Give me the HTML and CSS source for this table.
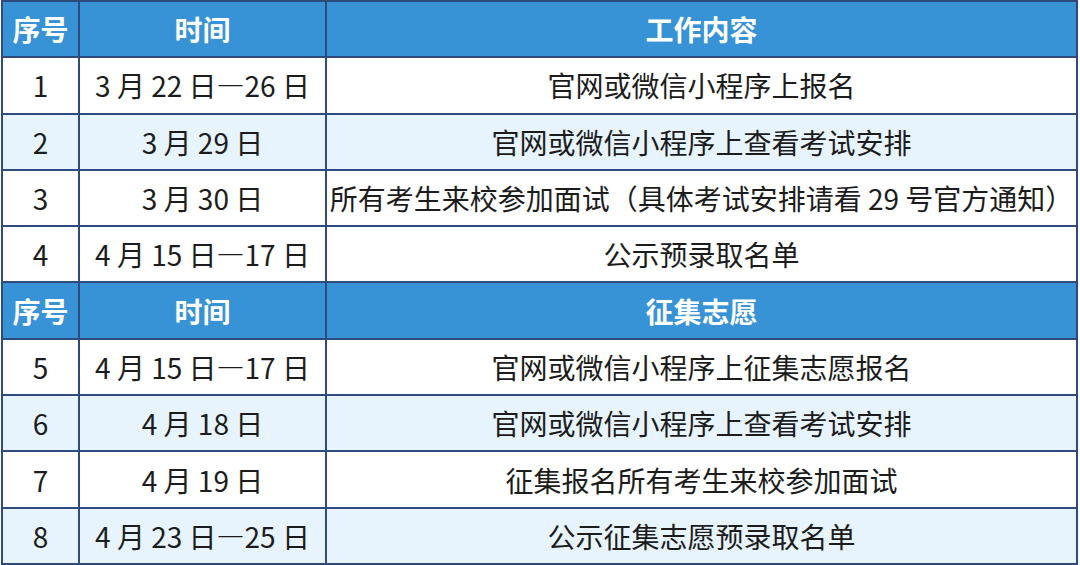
FILE: index.html
```html
<!DOCTYPE html>
<html lang="zh-CN">
<head>
<meta charset="utf-8">
<link rel="stylesheet" href="styles.css">
</head>
<body>
<table class="schedule">
  <colgroup>
    <col class="c-no">
    <col class="c-time">
    <col class="c-work">
  </colgroup>
  <tr class="head"><th>序号</th><th>时间</th><th>工作内容</th></tr>
  <tr><td>1</td><td>3 月 22 日—26 日</td><td>官网或微信小程序上报名</td></tr>
  <tr class="alt"><td>2</td><td>3 月 29 日</td><td>官网或微信小程序上查看考试安排</td></tr>
  <tr><td>3</td><td>3 月 30 日</td><td>所有考生来校参加面试（具体考试安排请看 29 号官方通知）</td></tr>
  <tr><td>4</td><td>4 月 15 日—17 日</td><td>公示预录取名单</td></tr>
  <tr class="head"><th>序号</th><th>时间</th><th>征集志愿</th></tr>
  <tr><td>5</td><td>4 月 15 日—17 日</td><td>官网或微信小程序上征集志愿报名</td></tr>
  <tr class="alt"><td>6</td><td>4 月 18 日</td><td>官网或微信小程序上查看考试安排</td></tr>
  <tr><td>7</td><td>4 月 19 日</td><td>征集报名所有考生来校参加面试</td></tr>
  <tr class="alt"><td>8</td><td>4 月 23 日—25 日</td><td>公示征集志愿预录取名单</td></tr>
</table>
</body>
</html>
```
FILE: styles.css
```css
html, body {
  margin: 0;
  padding: 0;
  background: #ffffff;
}
body {
  padding: 0 0 0 1px;
}
.schedule {
  border-collapse: collapse;
  width: 1077px;
  table-layout: fixed;
  font-family: "Noto Sans CJK SC", "Noto Sans", sans-serif;
  color: #1c1c1c;
}
.c-no { width: 77px; }
.c-time { width: 247px; }
.c-work { width: auto; }
.schedule th,
.schedule td {
  border: 2px solid #2f4a7c;
  height: 54.3px;
  padding: 0;
  text-align: center;
  vertical-align: middle;
  white-space: nowrap;
  font-size: 28px;
  line-height: 1;
}
.schedule th {
  background: #3793d5;
  color: #ffffff;
  font-weight: 700;
  font-size: 28px;
}
.schedule td {
  background: #ffffff;
  font-weight: 400;
}
.schedule .alt td {
  background: #e7f3fd;
}
```
